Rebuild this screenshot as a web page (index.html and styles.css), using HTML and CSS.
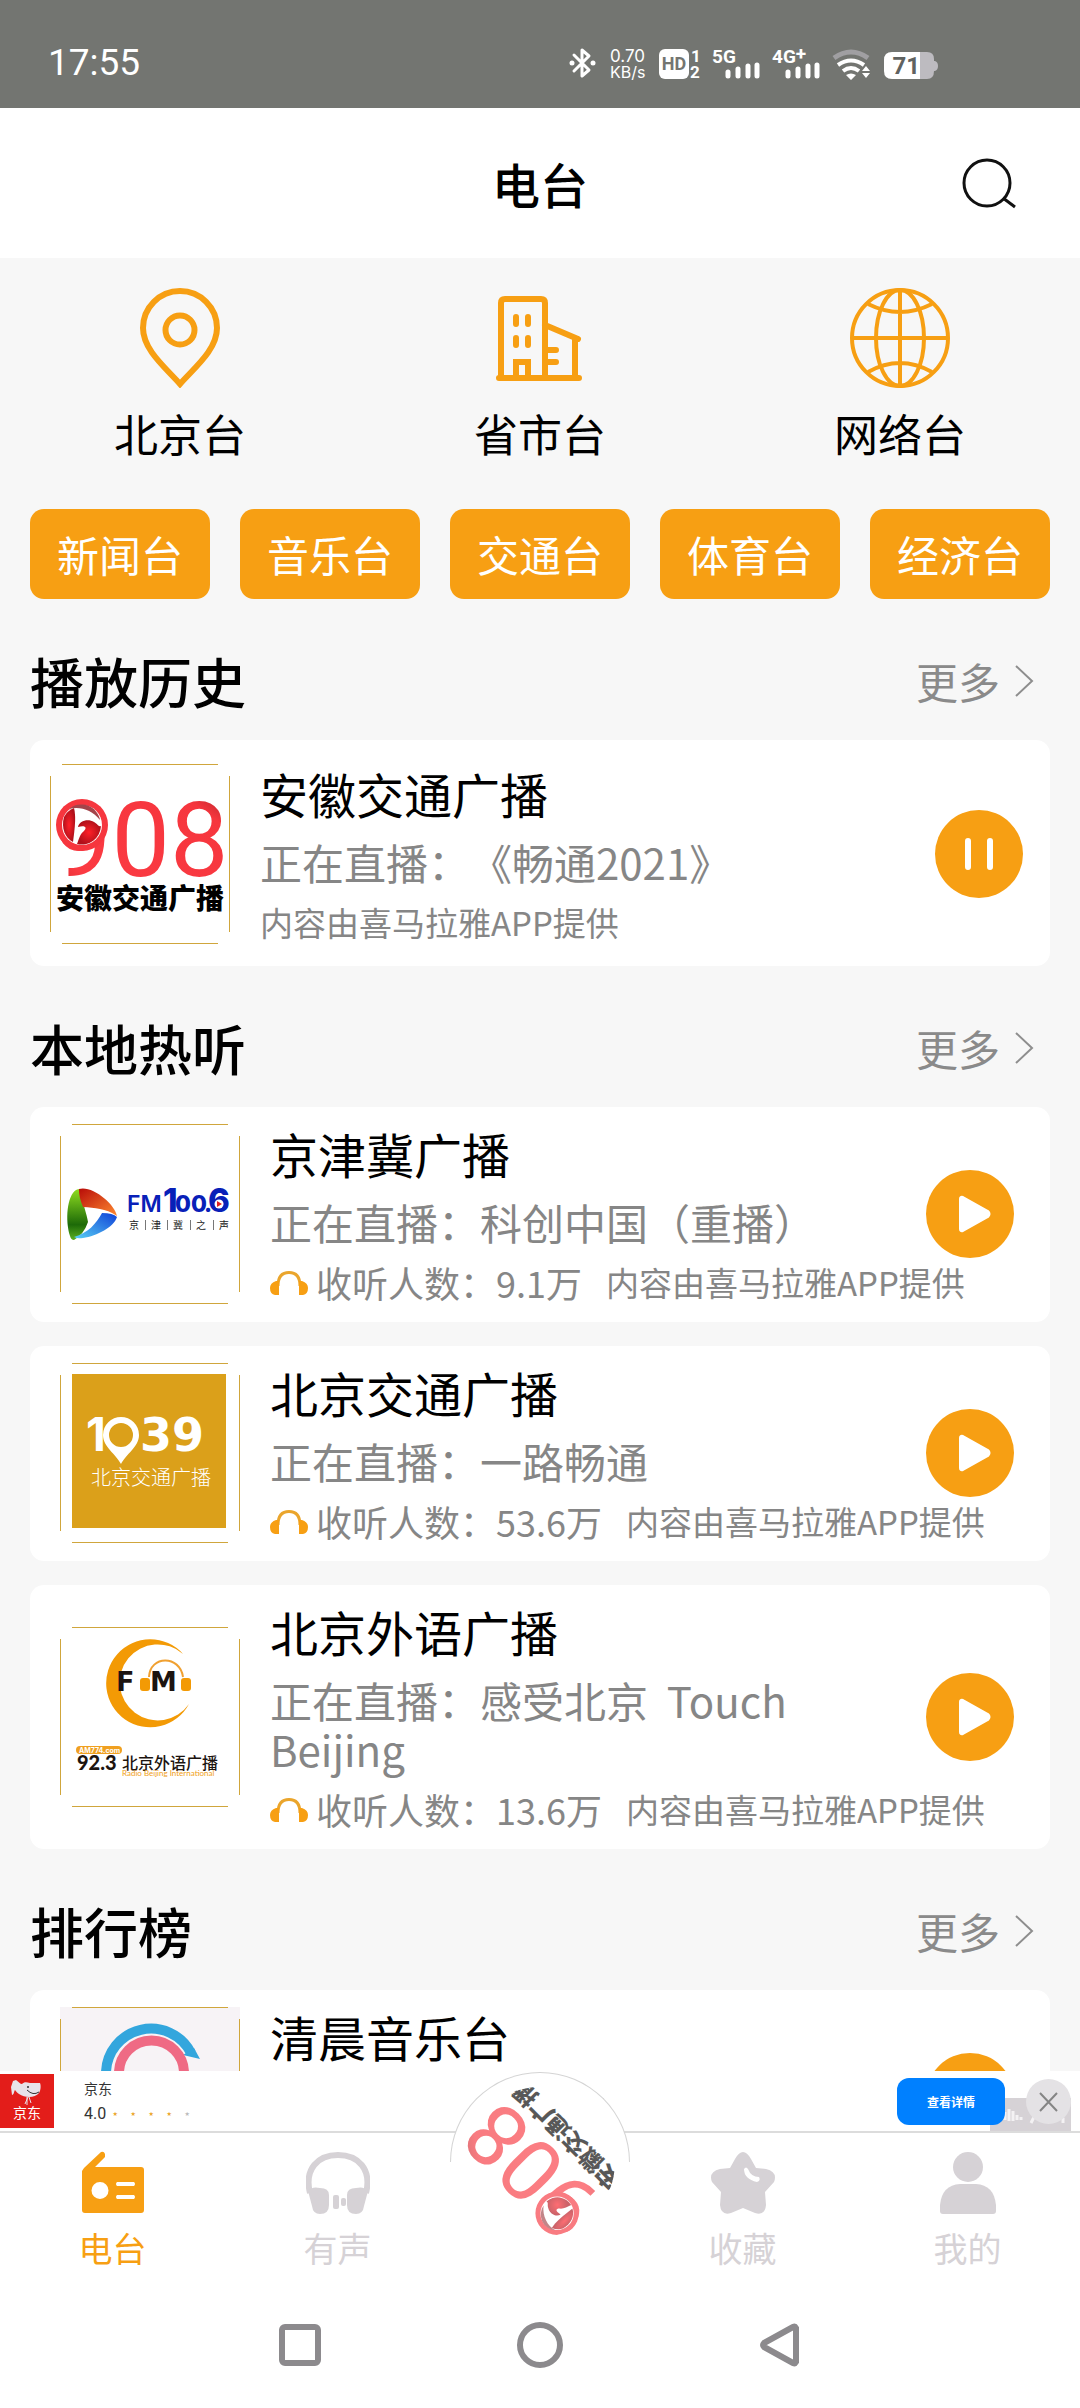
FILE: index.html
```html
<!DOCTYPE html>
<html lang="zh-CN">
<head>
<meta charset="utf-8">
<meta name="viewport" content="width=device-width, initial-scale=1">
<title>电台</title>
<link rel="stylesheet" href="styles.css">
</head>
<body>
<svg class="defs" aria-hidden="true">
  <defs>
    <linearGradient id="red" x1="0" y1="1" x2="1" y2="0">
      <stop offset="0" stop-color="#c81e28"/><stop offset=".2" stop-color="#fb3a42"/><stop offset=".8" stop-color="#f6363e"/><stop offset="1" stop-color="#8e1a1e"/>
    </linearGradient>
    <radialGradient id="ball"><stop offset="0" stop-color="#ff2028"/><stop offset="1" stop-color="#b0101a"/></radialGradient>
    <linearGradient id="lgreen" x1="0" y1="0" x2="0" y2="1"><stop offset="0" stop-color="#8fdc20"/><stop offset=".7" stop-color="#1d6a08"/><stop offset="1" stop-color="#5cb020"/></linearGradient>
    <linearGradient id="lred" x1="0" y1="0" x2="1" y2="1"><stop offset="0" stop-color="#b80c08"/><stop offset="1" stop-color="#ff8a30"/></linearGradient>
    <linearGradient id="lblue" x1="0" y1="1" x2="1" y2="0"><stop offset="0" stop-color="#58d0f4"/><stop offset="1" stop-color="#1040d8"/></linearGradient>
  </defs>
  <symbol id="emblem" viewBox="0 0 180 180">
    <circle cx="32" cy="61" r="26" fill="#f6363e"/>
    <circle cx="32" cy="61" r="20" fill="#fff"/>
    <path d="M14 53a19.500 19.500 0 0 1 10-9c2 8 1 17 0 26l-1 8c-8-4-12-14-9-25z" fill="url(#ball)"/>
    <path d="M27 80c2-5 3-10 7-13 3-3 2-6-6-4 1-6 10-9 16-5 4 2 4 5 7 4a19.500 19.500 0 0 1-24 18z" fill="url(#ball)"/>
    <path d="M19 45a19 19 0 0 1 31 11c-8-10-20-14-31-11z" fill="#a3444a"/>
  </symbol>
  <symbol id="frame" viewBox="0 0 180 180">
    <path d="M12 .5h156M12 179.500h156M.5 12v156M179.500 12v156" stroke="#d0a63c" fill="none"/>
  </symbol>
  <symbol id="play" viewBox="0 0 88 88">
    <path d="M34 29v30q0 3 3 2l25-14q3-3 0-6L37 27q-3-1-3 2z" fill="#fff" stroke="#fff" stroke-width="2" stroke-linejoin="round"/>
  </symbol>
  <symbol id="ears" viewBox="0 0 38 26">
    <path d="M8 16C8 6 13 2.500 19 2.500S30 6 30 16" fill="none" stroke="#eaa52c" stroke-width="3"/>
    <path d="M9 11v14H5q-5-1-5-7 0-5 6-7zM29 11v14h4q5-1 5-7 0-5-6-7z" fill="#f79f13"/>
  </symbol>
  <symbol id="chev" viewBox="0 0 20 34">
    <path d="M2 2l16 15L2 32" fill="none" stroke="#8e8e8e" stroke-width="2"/>
  </symbol>
</svg>

<div class="app">
  <div class="status">
    <span class="time">17:55</span>
    <svg class="status-icons" viewBox="0 0 372 32" aria-label="状态图标">
      <g fill="none" stroke="#fff" stroke-width="3" stroke-linejoin="round" stroke-linecap="round">
        <path d="M6 8l15 15-7 6V3l7 6L6 24"/>
      </g>
      <circle cx="4" cy="16" r="2.500" fill="#fff"/><circle cx="25" cy="16" r="2.500" fill="#fff"/>
      <text x="42" y="15" class="s-net">0.70</text>
      <text x="42" y="31" class="s-unit">KB/s</text>
      <rect x="91" y="2" width="30" height="30" rx="6" fill="#fff"/>
      <text x="106" y="23" text-anchor="middle" class="s-hd">HD</text>
      <text x="123" y="15" class="s-sim">1</text>
      <text x="122" y="31" class="s-sim">2</text>
      <text x="144" y="16" class="s-gen">5G</text>
      <text x="204" y="16" class="s-gen">4G<tspan dy="-3">+</tspan></text>
      <path d="M160 29v-4M170 29v-7M180 29V19M189 29V18M220 29v-4M230 29v-7M240 29V19M249 29V18" stroke="#fff" stroke-width="5" stroke-linecap="round"/>
      <path d="M266 11q17-12 34 0" fill="none" stroke="#a09fa2" stroke-width="5"/>
      <path d="M270 18q13-9 26 0M275 24q8-6 16 0" fill="none" stroke="#fff" stroke-width="4"/>
      <path d="M278 28q5-3 10 0l-5 5zM294 24l4-5 4 5zM294 26l4 5 4-5z" fill="#fff"/>
      <path d="M324 5h28v27h-28q-8 0-8-8V13q0-8 8-8z" fill="#fff"/>
      <path d="M352 5h7q7 0 7 7v2h1q3 1 3 5t-3 5h-1q0 8-7 8h-7z" fill="#bdbbc0"/>
      <text x="352" y="27" text-anchor="end" class="s-bat">71</text>
    </svg>
  </div>

  <header class="header">
    <h1>电台</h1>
    <button class="search" aria-label="搜索">
      <svg viewBox="0 0 60 60"><circle cx="27" cy="30" r="23"/><path d="M43 45l12 9"/></svg>
    </button>
  </header>

  <main class="content">
    <nav class="kinds">
      <a href="#local">
        <svg viewBox="0 0 100 100"><path d="M50 96C36 80 13 62 13 40a37 37 0 0 1 74 0c0 22-23 40-37 56z"/><circle cx="50" cy="42" r="14.500"/></svg>
        北京台
      </a>
      <a href="#province">
        <svg viewBox="0 0 100 100"><path d="M11 89V15q0-4 4-4h36q4 0 4 4v74M9 90h80M55 37l33 14M85 50v39M55 62h11M55 74h11M26 90V74h12v16" stroke-linecap="round"/><path d="M26 29v7M38 29v7M26 50v7M38 50v7" stroke-linecap="round"/></svg>
        省市台
      </a>
      <a href="#net">
        <svg viewBox="0 0 100 100" class="thin"><circle cx="50" cy="50" r="48"/><path d="M50 2v96M2 50h96M18 16q32 16 64 0M18 84q32-18 64 0"/><ellipse cx="50" cy="50" rx="24" ry="48"/></svg>
        网络台
      </a>
    </nav>

    <div class="chips">
      <button>新闻台</button><button>音乐台</button><button>交通台</button><button>体育台</button><button>经济台</button>
    </div>

    <section>
      <div class="head"><h2>播放历史</h2><a href="#history">更多<svg><use href="#chev"/></svg></a></div>
      <article class="card recent">
        <svg class="thumb" viewBox="0 0 180 180">
          <text x="3" y="112" class="l-908" fill="url(#red)">908</text>
          <use href="#emblem"/>
          <text x="90" y="145" text-anchor="middle" class="l-908-name">安徽交通广播</text>
          <use href="#frame"/>
        </svg>
        <div class="info">
          <h3>安徽交通广播</h3>
          <p class="live">正在直播：《畅通2021》</p>
          <p class="meta"><small>内容由喜马拉雅APP提供</small></p>
        </div>
        <button class="toggle" aria-label="暂停"><svg viewBox="0 0 88 88"><path d="M33 31v26M55 31v26" stroke="#fff" stroke-width="6" stroke-linecap="round"/></svg></button>
      </article>
    </section>

    <section>
      <div class="head"><h2>本地热听</h2><a href="#hot">更多<svg><use href="#chev"/></svg></a></div>
      <div class="list">
        <article class="card">
          <svg class="thumb" viewBox="0 0 180 180">
            <path d="M10 112C5 96 7 72 16 66q4-2 6 0C22 80 27 90 28 98q-4 12-14 18-3 0-4-4z" fill="url(#lgreen)"/>
            <path d="M19 65c13-4 36 15 38 27-12-8-22-8-34-9-3-7-4-12-4-18z" fill="url(#lred)"/>
            <path d="M57 93c-3 10-20 19-34 21q-6 1-9-1c14-4 22-13 28-24q11 0 15 4z" fill="url(#lblue)"/>
            <text x="67" y="88" class="l-fm">FM</text>
            <text x="103" y="88" class="l-fm-big">1</text>
            <text x="115" y="88" class="l-fm-mid">00</text>
            <text x="144" y="88" class="l-fm-mid">.</text>
            <text x="148" y="88" class="l-fm-big">6</text>
            <circle cx="159" cy="80" r="4.500" fill="#fff"/><path d="M157 77l5 3-5 3z" fill="#e02020"/>
            <g class="l-fm-sub"><text x="69" y="105">京</text><text x="91" y="105">津</text><text x="113" y="105">冀</text><text x="136" y="105">之</text><text x="159" y="105">声</text></g>
            <path d="M85.500 96v10M107.500 96v10M130.500 96v10M153.500 96v10" stroke="#777"/>
            <use href="#frame"/>
          </svg>
          <div class="info">
            <h3>京津冀广播</h3>
            <p class="live">正在直播：科创中国（重播）</p>
            <p class="meta"><svg><use href="#ears"/></svg>收听人数：9.1万<small>内容由喜马拉雅APP提供</small></p>
          </div>
          <button class="toggle" aria-label="播放"><svg><use href="#play"/></svg></button>
        </article>

        <article class="card">
          <svg class="thumb" viewBox="0 0 180 180">
            <rect x="12" y="11" width="154" height="154" fill="#dba01a"/>
            <text x="26" y="88" class="l-1039-one">1</text>
            <path fill-rule="evenodd" d="M61 101C56 91 43 84 43 72a18 18 0 0 1 36 0c0 12-13 19-18 29zM61 60a12 12 0 1 0 0 24 12 12 0 0 0 0-24z" fill="#fff"/>
            <text x="80" y="88" class="l-1039">39</text>
            <text x="91" y="122" text-anchor="middle" class="l-1039-name">北京交通广播</text>
            <use href="#frame"/>
          </svg>
          <div class="info">
            <h3>北京交通广播</h3>
            <p class="live">正在直播：一路畅通</p>
            <p class="meta"><svg><use href="#ears"/></svg>收听人数：53.6万<small>内容由喜马拉雅APP提供</small></p>
          </div>
          <button class="toggle" aria-label="播放"><svg><use href="#play"/></svg></button>
        </article>

        <article class="card">
          <svg class="thumb" viewBox="0 0 180 180">
            <path d="M123 27A44 44 0 1 0 129 77A38 38 0 1 1 123 27z" fill="#f39a05"/>
            <path d="M89 50C90 28 120 28 123 50" fill="none" stroke="#f0a030" stroke-width="2"/>
            <rect x="80" y="51" width="10" height="13" rx="3" fill="#f39a05"/><rect x="121" y="51" width="10" height="13" rx="3" fill="#f39a05"/>
            <text x="56" y="64" class="l-923-fm">F</text><text x="90" y="64" class="l-923-fm">M</text>
            <rect x="16" y="119" width="46" height="8" rx="4" fill="#f0a020"/>
            <text x="19" y="126" class="l-923-am">AM774.com</text>
            <text x="17" y="143" class="l-923-no">92.3</text>
            <text x="62" y="142" class="l-923-name">北京外语广播</text>
            <text x="62" y="149" class="l-923-en">Radio Beijing International</text>
            <use href="#frame"/>
          </svg>
          <div class="info">
            <h3>北京外语广播</h3>
            <p class="live">正在直播：感受北京&nbsp; Touch Beijing</p>
            <p class="meta"><svg><use href="#ears"/></svg>收听人数：13.6万<small>内容由喜马拉雅APP提供</small></p>
          </div>
          <button class="toggle" aria-label="播放"><svg><use href="#play"/></svg></button>
        </article>
      </div>
    </section>

    <section>
      <div class="head"><h2>排行榜</h2><a href="#rank">更多<svg><use href="#chev"/></svg></a></div>
      <article class="card">
        <svg class="thumb" viewBox="0 0 180 180">
          <rect width="180" height="180" fill="#f7f3f6"/>
          <path d="M46 66a45 45 0 0 1 85-20" fill="none" stroke="#33a6dd" stroke-width="10"/>
          <path d="M123 48l11-7 6 11z" fill="#33a6dd"/>
          <path d="M59 66a32.500 32.500 0 0 1 65 0" fill="none" stroke="#ef6a84" stroke-width="10"/>
          <use href="#frame"/>
        </svg>
        <div class="info">
          <h3>清晨音乐台</h3>
          <p class="live">&nbsp;</p>
          <p class="meta">&nbsp;</p>
        </div>
        <button class="toggle" aria-label="播放"><svg><use href="#play"/></svg></button>
      </article>
    </section>
  </main>

  <aside class="ad">
    <svg class="jd" viewBox="0 0 54 54">
      <rect width="54" height="54" fill="#e31d1a"/>
      <path d="M11 13l2-6 3-1c3 2 4 4 6 4 2-2 4-2 8-1h10c1 2 1 7-1 10-4 5-14 5-20 1-2-1-3-3-4-4-1 1-1 5-3 5z" fill="#e8e4ea"/>
      <path d="M28 23l-3 7M27 23v8M29 23l2 6" fill="none" stroke="#e8e4ea"/>
      <path d="M27 16q6 6 12 2" fill="none" stroke="#333"/><circle cx="28" cy="13" r="1" fill="#333"/>
      <text x="27" y="44" text-anchor="middle">京东</text>
    </svg>
    <div class="ad-text">
      <span>京东</span>
      <span class="rate">4.0<i>★</i><i>★</i><i>★</i><i>★</i><i class="off">★</i></span>
    </div>
    <svg class="ad-mark" viewBox="0 0 81 33"><rect width="81" height="33" fill="#d6d2d6"/><path d="M15 22v-8M19 23V11M23 23V13M27 22v-5M31 22v-3M41 25l3-6M73 25v-5" stroke="#f4f2f4" stroke-width="3"/></svg>
    <button class="cta">查看详情</button>
    <button class="close" aria-label="关闭"><svg viewBox="0 0 45 45"><path d="M14 14l17 18M31 14L14 32"/></svg></button>
  </aside>

  <nav class="tabs">
    <a href="#radio" class="on">
      <svg viewBox="0 0 64 64"><path fill-rule="evenodd" d="M3 17L20 1q3-1 4 2v3L14 16h46q3 0 3 3v40q0 3-3 3H4q-3 0-3-3V20zM19 31a8.500 8.500 0 1 0 0 17 8.500 8.500 0 0 0 0-17zM36 31q-2 2 0 4h17q2-2 0-4zM36 44q-2 2 0 4h17q2-2 0-4z"/></svg>
      电台
    </a>
    <a href="#audio">
      <svg viewBox="0 0 64 64"><path d="M4 42C-2 18 12 4 32 4s34 14 28 38" fill="none" stroke="currentColor" stroke-width="6"/><path d="M2 40q4-5 12-3 9 0 9 7v10q0 9-9 9-7 0-8-8zM62 40q-4-5-12-3-9 0-9 7v10q0 9 9 9 7 0 8-8z"/><rect x="27" y="44" width="6" height="14" rx="2"/><rect x="35" y="47" width="5" height="8" rx="2"/></svg>
      有声
    </a>
    <button class="player" aria-label="正在播放">
      <svg viewBox="0 0 180 180">
        <text x="3" y="112" class="l-908" fill="url(#red)">908</text>
        <use href="#emblem"/>
        <text x="90" y="145" text-anchor="middle" class="l-908-name">安徽交通广播</text>
      </svg>
    </button>
    <a href="#fav">
      <svg viewBox="0 0 64 64"><path fill-rule="evenodd" d="M24 8q8-14 16 0l5 9 10 1q12 3 8 13l-9 10 1 13q-1 11-11 8l-12-5-12 5q-10 3-11-8l1-13-9-10q-4-10 8-13l10-1zM33 18q0 10 13 13 4-1 2-5-8 0-11-8-2-3-4 0z"/></svg>
      收藏
    </a>
    <a href="#me">
      <svg viewBox="0 0 64 64"><ellipse cx="32" cy="16" rx="15" ry="15"/><path d="M4 60V54Q6 34 24 33h16q18 1 20 21v6q0 3-3 3H7q-3 0-3-3z"/></svg>
      我的
    </a>
  </nav>

  <div class="sysnav">
    <button aria-label="最近任务"><svg viewBox="0 0 48 48"><rect x="6" y="6" width="36" height="36" rx="3"/></svg></button>
    <button aria-label="主页"><svg viewBox="0 0 48 48"><circle cx="24" cy="24" r="20"/></svg></button>
    <button aria-label="返回"><svg viewBox="0 0 48 48"><path d="M40 7v34q-1 2-3 1L8 26q-2-2 0-4L37 6q2-1 3 1z"/></svg></button>
  </div>
</div>
</body>
</html>
```
FILE: styles.css
```css
* { box-sizing: border-box; }
body {
  margin: 0;
  background: #f7f7f7;
  color: #000;
  font-family: "Noto Sans CJK SC", "Noto Sans", sans-serif;
  text-spacing-trim: space-all;
}
h1, h2, h3, p { margin: 0; }
a { color: inherit; text-decoration: none; }
button { border: 0; padding: 0; background: none; font: inherit; color: inherit; }
svg { display: block; }
.defs { position: absolute; width: 0; height: 0; }

.app { display: flex; flex-direction: column; height: 100vh; }

/* status bar */
.status {
  flex: none;
  display: flex;
  align-items: center;
  justify-content: space-between;
  height: 108px;
  padding: 18px 140px 0 48px;
  background: #737571;
  color: #fff;
}
.time { font: 37px/44px Roboto, sans-serif; }
.status-icons { width: 372px; height: 34px; overflow: visible; }
.status-icons text { font-family: Roboto, sans-serif; fill: #fff; }
.status-icons .s-net { font-family: Inter, sans-serif; font-size: 17px; }
.status-icons .s-unit { font-family: Inter, sans-serif; font-size: 16px; }
.status-icons .s-hd { font-size: 18px; font-weight: 700; fill: #737571; }
.status-icons .s-sim { font-size: 17px; font-weight: 700; }
.status-icons .s-gen { font-size: 19px; font-weight: 700; }
.status-icons .s-bat { font-size: 24px; font-weight: 700; fill: #606260; }

/* title bar */
.header {
  flex: none;
  position: relative;
  display: flex;
  align-items: center;
  justify-content: center;
  height: 150px;
  background: #fff;
}
.header h1 { font-size: 48px; line-height: 64px; font-weight: 500; }
.search { position: absolute; right: 60px; top: 45px; }
.search svg { width: 60px; height: 60px; fill: none; stroke: #111; stroke-width: 3; }

.content { flex: 1; min-height: 0; overflow: hidden; padding: 30px 30px 0; }

.kinds { display: grid; grid-template-columns: repeat(3, 1fr); margin: 0 -30px; }
.kinds a {
  display: flex;
  flex-direction: column;
  align-items: center;
  gap: 13px;
  font-size: 44px;
  line-height: 64px;
}
.kinds svg { width: 100px; height: 100px; fill: none; stroke: #f79f13; stroke-width: 6; }
.kinds svg.thin { stroke-width: 4; }

.chips { display: grid; grid-template-columns: repeat(5, 1fr); gap: 30px; margin-top: 44px; }
.chips button {
  height: 90px;
  border-radius: 14px;
  background: #f79f13;
  color: #fff;
  font-size: 42px;
  line-height: 88px;
}

.head {
  display: flex;
  align-items: center;
  justify-content: space-between;
  height: 141px;
  padding: 22px 16px 0 0;
}
.head h2 { font-size: 54px; line-height: 64px; font-weight: 500; }
.head a {
  display: flex;
  align-items: center;
  gap: 14px;
  color: #8a8a8a;
  font-size: 42px;
  line-height: 49px;
}
.head svg { width: 20px; height: 34px; }

.list { display: flex; flex-direction: column; gap: 24px; }
.card {
  display: flex;
  align-items: center;
  gap: 30px;
  padding: 14px 36px 15px 30px;
  border-radius: 14px;
  background: #fff;
}
.card.recent { padding: 21px 27px 19px 20px; }
.thumb { flex: none; width: 180px; height: 180px; margin: -20px 0; }
.info { flex: 1; min-width: 0; display: flex; flex-direction: column; gap: 12px; }
.info h3 { font-size: 48px; line-height: 64px; font-weight: 400; }
.live { color: #868686; font-size: 42px; line-height: 49px; }
.meta {
  display: flex;
  align-items: center;
  color: #868686;
  font-size: 36px;
  line-height: 49px;
  white-space: nowrap;
}
.meta svg { flex: none; width: 38px; height: 26px; margin-right: 8px; }
.meta small { font-size: 33px; }
.meta svg ~ small { margin-left: 24px; }
.toggle { flex: none; width: 88px; height: 88px; border-radius: 50%; background: #f79f13; }
.toggle svg { width: 88px; height: 88px; }

/* station logos */
.l-908 { font: 400 104px Roboto, sans-serif; }
.l-908-name { font: 900 28px "Noto Sans CJK SC", sans-serif; }
.l-fm { font: 600 23px Inter, sans-serif; fill: #0820b8; }
.l-fm-big { font: 800 33px Inter, sans-serif; fill: #0820b8; }
.l-fm-mid { font: 800 23px Inter, sans-serif; fill: #0820b8; }
.l-fm-sub { font: 10px "Noto Sans CJK SC", sans-serif; fill: #222; }
.l-1039 { font: 700 46px "DejaVu Sans", sans-serif; fill: #fff; }
.l-1039-one { font: 700 46px Inter, sans-serif; fill: #fff; }
.l-1039-name { font: 300 20px "Noto Sans CJK SC", sans-serif; fill: #fff; }
.l-923-fm { font: 700 27px "DejaVu Sans", sans-serif; fill: #1c1410; }
.l-923-am { font: 700 7px Inter, sans-serif; fill: #fff; }
.l-923-no { font: 900 20px Lato, sans-serif; fill: #1c1410; }
.l-923-name { font: 500 16px "Noto Sans CJK SC", sans-serif; fill: #1c1410; }
.l-923-en { font: 8px Lato, sans-serif; fill: #f0a020; }

/* advert strip */
.ad {
  flex: none;
  position: relative;
  display: flex;
  align-items: center;
  height: 60px;
  padding-right: 9px;
  background: #fff;
}
.jd { width: 54px; height: 54px; }
.jd text { font-size: 14px; fill: #fff; }
.ad-text {
  flex: 1;
  display: flex;
  flex-direction: column;
  gap: 6px;
  padding-left: 30px;
  color: #333;
  font-size: 14px;
  line-height: 20px;
}
.rate { display: flex; align-items: center; font-family: Roboto, sans-serif; font-size: 16px; }
.rate i { width: 18px; text-align: center; color: #eaa52c; font: 6px/20px "DejaVu Sans", sans-serif; }
.rate .off { color: #bbb; }
.cta {
  position: relative;
  width: 108px;
  height: 47px;
  margin-right: 21px;
  border-radius: 12px;
  background: #0080ff;
  color: #fff;
  font-size: 12px;
  font-weight: 700;
}
.ad-mark { position: absolute; right: 9px; bottom: 0; width: 81px; height: 33px; }
.close { position: relative; width: 45px; height: 45px; border-radius: 50%; background: #e4e2e5; }
.close svg { width: 45px; height: 45px; stroke: #858585; stroke-width: 2; }

/* tab bar */
.tabs {
  flex: none;
  position: relative;
  display: grid;
  grid-template-columns: 1fr 1fr 180px 1fr 1fr;
  height: 151px;
  border-top: 2px solid #dcdcdc;
  background: #fff;
  color: #d6d2d6;
}
.tabs a {
  display: flex;
  flex-direction: column;
  align-items: center;
  gap: 8px;
  padding-top: 18px;
  font-size: 34px;
  line-height: 49px;
}
.tabs a svg { width: 64px; height: 64px; fill: currentColor; }
.tabs .on { color: #f79f13; }
.player {
  position: relative;
  display: flex;
  align-items: center;
  justify-content: center;
  width: 180px;
  height: 180px;
  margin-top: -61px;
}
.player::before {
  content: "";
  position: absolute;
  inset: 0 0 50%;
  border: 1px solid #d4d4d4;
  border-bottom: 0;
  border-radius: 90px 90px 0 0;
  background: #fff;
}
.player svg {
  position: relative;
  width: 150px;
  height: 150px;
  border-radius: 50%;
  opacity: .65;
  transform: rotate(225deg);
}

/* system navigation */
.sysnav {
  flex: none;
  display: flex;
  align-items: center;
  justify-content: center;
  gap: 192px;
  height: 126px;
  background: #fff;
}
.sysnav svg { width: 48px; height: 48px; fill: none; stroke: #8c8a8d; stroke-width: 6; }
```
